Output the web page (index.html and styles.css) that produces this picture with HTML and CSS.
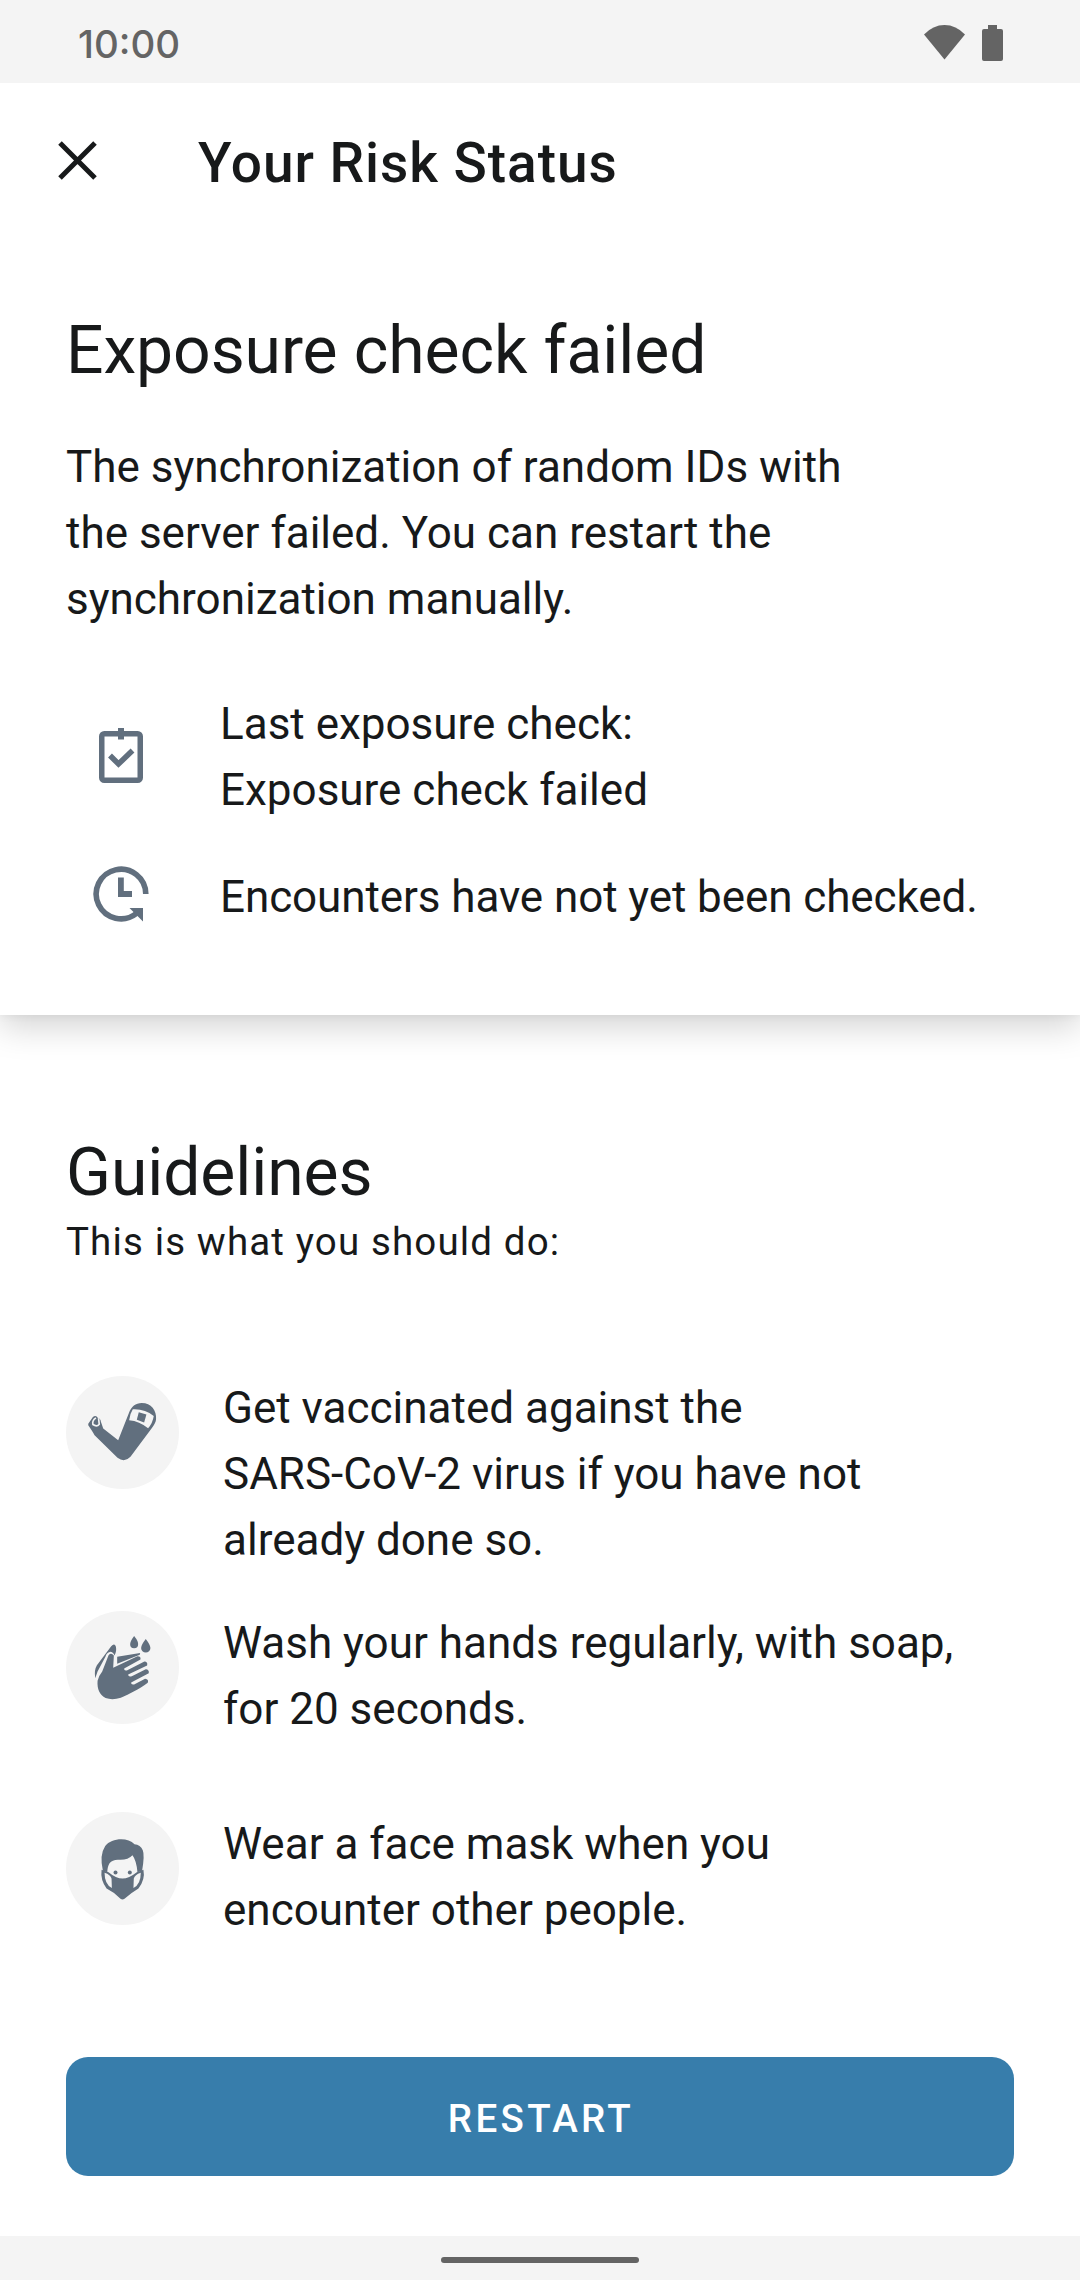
FILE: index.html
```html
<!DOCTYPE html>
<html lang="en">
<head>
<meta charset="utf-8">
<title>Your Risk Status</title>
<link rel="stylesheet" href="styles.css">
</head>
<body>
<div class="screen">
  <div class="status-bar">
    <span class="clock">10:00</span>
    <svg class="wifi" viewBox="0 0 41 35"><path d="M0 9.500Q9 0 20.500 0T41 9.500L20.500 34.500Z"/></svg>
    <svg class="battery" viewBox="0 0 21 36"><path d="M6 0H15V4H19Q21 4 21 6V34Q21 36 19 36H2Q0 36 0 34V6Q0 4 2 4H6Z"/></svg>
  </div>

  <section class="card">
    <header class="toolbar">
      <svg class="close" viewBox="0 0 39 39"><path d="M2 2L37 37M37 2L2 37"/></svg>
      <h1 class="title">Your Risk Status</h1>
    </header>
    <h2 class="heading">Exposure check failed</h2>
    <p class="summary">The synchronization of random IDs with<br>the server failed. You can restart the<br>synchronization manually.</p>
    <div class="detail">
      <svg class="detail-icon" viewBox="0 0 66 66">
        <rect x="13.750" y="13.750" width="38.500" height="46.500" rx="2.500" fill="none" stroke="currentColor" stroke-width="5.500"/>
        <path fill="currentColor" d="M30 8H36V19.500H30Z"/>
        <path fill="none" stroke="currentColor" stroke-width="5.500" d="M22 35.500L30.500 44L44.500 30.500"/>
      </svg>
      <p>Last exposure check:<br>Exposure check failed</p>
    </div>
    <div class="detail encounters">
      <svg class="detail-icon" viewBox="0 0 66 66">
        <path fill="none" stroke="currentColor" stroke-width="5.600" d="M57.800 33A24.800 24.800 0 1 0 48.500 52.400"/>
        <path fill="currentColor" d="M41.500 47H55V60.500ZM30 16.500H35.800V30H44V36H30Z"/>
      </svg>
      <p>Encounters have not yet been checked.</p>
    </div>
  </section>

  <section class="guidelines">
    <h2 class="heading">Guidelines</h2>
    <p class="subtitle">This is what you should do:</p>
    <ul class="list">
      <li class="item">
        <svg class="badge" viewBox="17 17 340 340">
          <circle class="disc" cx="187" cy="187" r="170"/>
          <path class="ink" d="M84 161L98 140Q107 133 113 143Q121 144 122 155L129 175L174 210L206 129C214 108 226 98 245 98C273 98 290 120 288 147Q287 158 276 173L211 260Q193 279 172 263L103 195Q97 184 84 165Z"/>
          <path class="cut" d="M218 117Q254 115 281 137Q278 158 264 174Q238 153 207 150Q209 131 218 117Z"/>
          <path class="ink" d="M236 126L259 133L252 157L230 149Z"/>
          <path class="line" d="M107 143Q95 151 98 163Q110 171 117 162L115 144"/>
        </svg>
        <p>Get vaccinated against the<br>SARS-CoV-2 virus if you have not<br>already done so.</p>
      </li>
      <li class="item">
        <svg class="badge" viewBox="17 17 340 340">
          <circle class="disc" cx="187" cy="187" r="170"/>
          <path class="ink" d="M105 219Q101 195 110 180L153 123Q163 112 167 124Q170 139 163 151Q158 139 149 140Q139 142 136 154L112 199ZM171 155L240 143L239 149L216 158L171 176Z"/>
          <path class="ink" d="M145 150Q153 141 161 151L159 188L232 153Q243 153 241 163L192 190Q191 198 200 196L253 169Q264 170 261 181L204 208Q204 216 215 213L257 192Q268 193 266 204L213 232Q212 240 222 238L255 221Q267 223 263 233C235 254 209 266 182 278Q157 286 136 279C119 269 110 253 112 227Q116 211 126 199Z"/>
          <path class="ink" d="M222 92Q235 108 234 117A12 12 0 0 1 210 117Q210 108 222 92ZM257 101Q271 119 271 128A14 14 0 0 1 243 128Q243 119 257 101Z"/>
        </svg>
        <p>Wash your hands regularly, with soap,<br>for 20 seconds.</p>
      </li>
      <li class="item">
        <svg class="badge" viewBox="17 17 340 340">
          <circle class="disc" cx="187" cy="187" r="170"/>
          <path class="ink" d="M128 194Q117 146 135 119C153 95 203 91 223 114Q241 116 248 132Q254 146 246 194L232 198Q229 163 217 147Q204 161 181 161Q158 158 148 171Q142 180 141 198Z"/>
          <circle class="ink" cx="166" cy="199" r="6"/><circle class="ink" cx="209" cy="199" r="6"/>
          <path class="ink" d="M124 191L145 198Q168 217 187 217Q206 217 230 198L250 191Q256 221 235 247Q213 260 193 278Q187 282 181 278Q162 258 139 247Q120 222 124 191Z"/>
          <path class="cut" d="M133 200Q151 206 154 217L155 246Q133 235 133 200ZM242 200Q224 206 221 217L220 246Q242 235 242 200Z"/>
        </svg>
        <p>Wear a face mask when you<br>encounter other people.</p>
      </li>
    </ul>
  </section>

  <button class="restart">RESTART</button>
  <div class="nav-bar"><div class="pill"></div></div>
</div>
</body>
</html>
```
FILE: styles.css
```css
* { box-sizing: border-box; margin: 0; padding: 0; }

body {
  width: 1080px;
  background: #fff;
  color: #17191a;
  font: 400 44px/66px Roboto, sans-serif;
}

.screen { display: flex; flex-direction: column; height: 2280px; overflow: hidden; }
svg { display: block; flex: none; }

.status-bar {
  display: flex;
  flex: none;
  height: 83px;
  padding: 0 77px 0 78px;
  background: #f4f4f4;
  color: #646464;
  fill: #646464;
}
.clock { margin: 11px auto 0 0; font: 500 38.500px/66px Inter, sans-serif; }
.wifi { width: 41px; height: 35px; margin: 25px 17px 0 0; }
.battery { width: 21px; height: 36px; margin-top: 25px; }

.card {
  flex: none;
  height: 932px;
  background: #fff;
  box-shadow: 0 11px 33px rgba(0, 0, 0, .18), 0 2px 8px rgba(0, 0, 0, .04);
  clip-path: inset(0 0 -60px 0);
}
.toolbar { display: flex; align-items: center; height: 154px; padding-left: 58px; }
.close { width: 39px; height: 39px; fill: none; stroke: #17191a; stroke-width: 5px; }
.title { margin: 6px 0 0 101px; font-size: 55px; font-weight: 500; letter-spacing: .95px; }

.heading { font-size: 66px; font-weight: 400; line-height: 77px; letter-spacing: -.08px; }
.card .heading { margin: 75px 66px 45px; }
.summary { margin: 0 66px 59px; }

.detail { display: flex; align-items: center; margin: 0 0 41px 88px; }
.detail-icon { width: 66px; height: 66px; margin: 0 66px 8px 0; color: #616f7e; }
.encounters { height: 66px; letter-spacing: -.09px; }
.encounters .detail-icon { margin-bottom: 6px; }

.guidelines { flex: none; height: 1042px; padding: 119px 66px 0; }
.subtitle { margin-top: 5px; font-size: 38.500px; line-height: 52px; letter-spacing: 1.14px; }
.list { margin-top: 107px; list-style: none; }
.item { display: flex; min-height: 198px; }
.item + .item { margin-top: 37px; }
.item + .item + .item { margin-top: 3px; }
.badge { width: 113px; height: 113px; margin: 1px 44px 0 0; }
.disc, .cut { fill: #f4f4f4; }
.ink { fill: #616f7e; }
.line { fill: none; stroke: #f4f4f4; stroke-width: 5px; }

.restart {
  flex: none;
  height: 119px;
  margin: 0 66px;
  padding: 4px 0 0 2px;
  border: 0;
  border-radius: 22px;
  background: #377dab;
  color: #fff;
  font: 500 38.500px/52px Roboto, sans-serif;
  letter-spacing: 3.350px;
}
.nav-bar { flex: none; height: 44px; margin-top: 60px; padding-top: 21px; background: #f4f4f4; }
.pill { width: 198px; height: 6px; margin: 0 auto; border-radius: 3px; background: #646464; }
```
